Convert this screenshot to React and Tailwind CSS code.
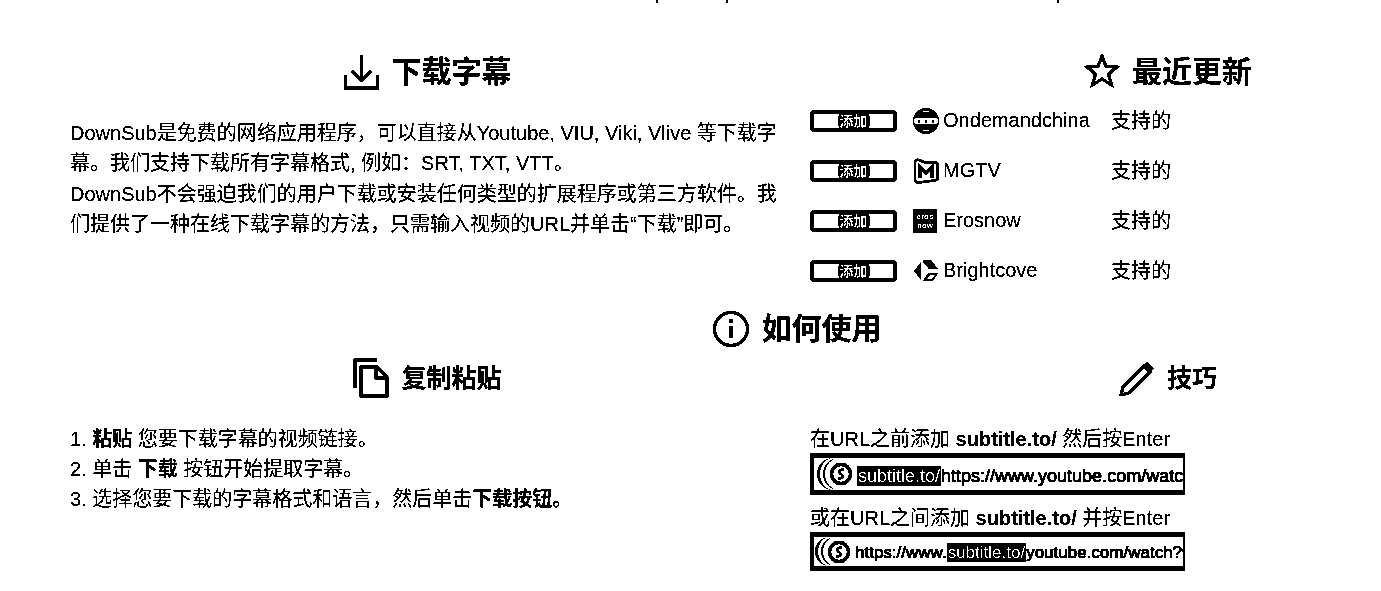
import React from 'react';

const DownloadIcon = () => (
  <svg width="36" height="36" viewBox="0 0 36 36" fill="none" stroke="black" strokeWidth="3">
    <path d="M1.500 21V34H33.500V21" />
    <path d="M17.500 1V26" />
    <path d="M8 17L17.500 26.500L27 17" />
  </svg>
);

const StarIcon = () => (
  <svg width="36" height="36" viewBox="0 0 36 36" fill="none" stroke="black" strokeWidth="3">
    <path d="M18 2L22 12.500L33 13L24.500 20L27.500 31L18 25L8.500 31L11.500 20L3 13L14 12.500Z" />
  </svg>
);

const InfoIcon = () => (
  <svg width="38" height="38" viewBox="0 0 38 38" fill="none">
    <circle cx="19" cy="19" r="16.500" stroke="black" strokeWidth="3" />
    <rect x="17" y="9" width="4" height="4" fill="black" />
    <rect x="17" y="16" width="4" height="12" fill="black" />
  </svg>
);

const CopyIcon = () => (
  <svg width="36" height="40" viewBox="0 0 36 40" fill="none" stroke="black" strokeWidth="3">
    <path d="M24 2H2V30" />
    <path d="M8 9H24L34 19V38H8Z" />
    <path d="M23 9V20H34" />
  </svg>
);

const PencilIcon = () => (
  <svg width="36" height="36" viewBox="0 0 36 36" fill="none">
    <path d="M25 6L31 12L10 33L2 35L4 27Z" stroke="black" strokeWidth="3" />
    <path d="M28 1.500L35 8.500L31.500 12L24.500 5Z" fill="black" />
  </svg>
);

const OdcLogo = () => (
  <svg width="26" height="26" viewBox="0 0 26 26">
    <circle cx="13" cy="13" r="13" fill="black" />
    <rect x="1" y="10" width="24" height="6" rx="3" fill="white" />
    <circle cx="6" cy="13" r="1.500" fill="black" />
    <circle cx="13" cy="13" r="1.500" fill="black" />
    <circle cx="20" cy="13" r="1.500" fill="black" />
    <rect x="10" y="3" width="6" height="1.500" fill="white" />
    <rect x="10" y="21.500" width="6" height="1.500" fill="white" />
  </svg>
);

const MgtvLogo = () => (
  <svg width="26" height="26" viewBox="0 0 26 26" fill="none">
    <path d="M2 4C2 2 4 1.500 6 2L12 4.500H22C24 4.500 24.500 6 24.500 7V20C24.500 22 23 22.500 21 22.500L6 24.500C3 25 2 23 2 21Z" stroke="black" strokeWidth="2.500" />
    <path d="M7 20V9L13 15L19 9V20" stroke="black" strokeWidth="3.500" />
  </svg>
);

const ErosLogo = () => (
  <div className="flex h-6 w-6 flex-col items-center justify-center bg-black text-[8px] leading-[9px] font-bold text-white">
    <span>eros</span>
    <span>now</span>
  </div>
);

const BrightcoveLogo = () => (
  <svg width="26" height="26" viewBox="0 0 26 26">
    <path d="M1 13L8 4L8 22Z" fill="black" />
    <path d="M10 2H18L25 11H16L10 4Z" fill="black" />
    <path d="M15 15H25L20 23H10Z" fill="black" />
    <path d="M17 17H22L19 21H14Z" fill="white" />
  </svg>
);

const updates = [
  { name: 'Ondemandchina', logo: <OdcLogo /> },
  { name: 'MGTV', logo: <MgtvLogo /> },
  { name: 'Erosnow', logo: <ErosLogo /> },
  { name: 'Brightcove', logo: <BrightcoveLogo /> },
];

const Heading = ({ icon, size, children, gap = 'gap-[12px]' }) => (
  <div className={`flex items-center justify-center ${gap}`}>
    {icon}
    <span className={`font-bold ${size}`}>{children}</span>
  </div>
);

const UrlBar = ({ before, after, tall }) => (
  <div className={`flex w-[375px] items-center overflow-hidden border-y-[5px] border-l-[4px] border-r-[2px] border-black bg-white ${tall ? 'h-[42px] text-[18px]' : 'h-[39px] text-[17px]'}`}>
    <div className={`flex h-full shrink-0 items-center rounded-l-full border-l-[3px] border-black pl-[3px] ${tall ? 'ml-[3px]' : 'ml-[1px]'}`}>
      <div className="flex h-full items-center rounded-l-full border-l-2 border-black pl-[4px]">
        <svg width="24" height="24" viewBox="0 0 24 24" className="shrink-0">
          <circle cx="12" cy="12" r="9.500" fill="white" stroke="black" strokeWidth="3.500" />
          <path d="M15 7.500C10 7 9 10 12 12C15 14 14 17 9 16.500" fill="none" stroke="black" strokeWidth="2.500" />
        </svg>
      </div>
    </div>
    <div className="ml-[4px] whitespace-nowrap pt-[3px] [text-shadow:0_0_1px_black,0_0_1px_black,0_0_1px_black]">
      {before}
      <span className="bg-black px-px text-white [text-shadow:none]">subtitle.to/</span>
      {after}
    </div>
  </div>
);

const App = () => (
  <div className="h-[591px] w-[1381px] overflow-hidden bg-white text-black brightness-[.8] contrast-[40] font-['Liberation_Sans','Noto_Sans_CJK_SC',sans-serif]">
    <div className="flex h-[3px]">
      <span className="ml-[656px] w-[2px] bg-black" />
      <span className="ml-[68px] w-[2px] bg-black" />
      <span className="ml-[329px] w-[2px] bg-black" />
    </div>

    <div className="grid w-[1526px] grid-cols-[715px_716px] gap-x-[25px] pl-[70px] pt-[50px]">
      <section>
        <Heading icon={<DownloadIcon />} size="text-[30px] leading-[38px]">下载字幕</Heading>
        <div className="mt-[27px] text-[20px] leading-[30.250px]">
          <p>DownSub是免费的网络应用程序，可以直接从Youtube, VIU, Viki, Vlive 等下载字幕。我们支持下载所有字幕格式, 例如：SRT, TXT, VTT。</p>
          <p>DownSub不会强迫我们的用户下载或安装任何类型的扩展程序或第三方软件。我们提供了一种在线下载字幕的方法，只需输入视频的URL并单击“下载”即可。</p>
        </div>
      </section>

      <section>
        <Heading icon={<StarIcon />} size="text-[30px] leading-[38px]">最近更新</Heading>
        <div className="mt-[19px] flex flex-col gap-[28px]">
          {updates.map((item) => (
            <div key={item.name} className="flex h-[22px] items-center text-[20px]">
              <div className="flex h-[22px] w-[87px] items-center justify-center rounded-[4px] border-[4px] border-black">
                <span className="rounded-[5px] bg-black px-[2px] text-[14px] leading-[16px] font-bold text-white">添加</span>
              </div>
              <div className="ml-[16px] flex w-[30px] shrink-0 items-center">{item.logo}</div>
              <span className="w-[168px] -translate-y-px">{item.name}</span>
              <span>支持的</span>
            </div>
          ))}
        </div>
      </section>
    </div>

    <div className="mt-[28px] w-[1593px]">
      <Heading icon={<InfoIcon />} size="text-[30px] leading-[38px]">如何使用</Heading>
    </div>

    <div className="grid w-[1526px] grid-cols-[715px_716px] gap-x-[25px] pl-[70px] pt-[10px]">
      <section>
        <Heading icon={<CopyIcon />} size="text-[25px] leading-[38px]">复制粘贴</Heading>
        <ol className="mt-[26px] text-[20px] leading-[30px]">
          <li>1. <b>粘贴</b> 您要下载字幕的视频链接。</li>
          <li>2. 单击 <b>下载</b> 按钮开始提取字幕。</li>
          <li>3. 选择您要下载的字幕格式和语言，然后单击<b>下载按钮。</b></li>
        </ol>
      </section>

      <section className="pt-px">
        <Heading icon={<PencilIcon />} size="text-[25px] leading-[38px]">技巧</Heading>
        <div className="mt-[29px] text-[20px] leading-[26px]">
          <p>在URL之前添加 <b>subtitle.to/</b> 然后按Enter</p>
          <div className="mt-[1px]"><UrlBar tall before="" after="https://www.youtube.com/watch?v=abc" /></div>
          <p className="mt-[10px]">或在URL之间添加 <b>subtitle.to/</b> 并按Enter</p>
          <div className="mt-[1px]"><UrlBar before="https://www." after="youtube.com/watch?v=abc" /></div>
        </div>
      </section>
    </div>
  </div>
);

export default App;
